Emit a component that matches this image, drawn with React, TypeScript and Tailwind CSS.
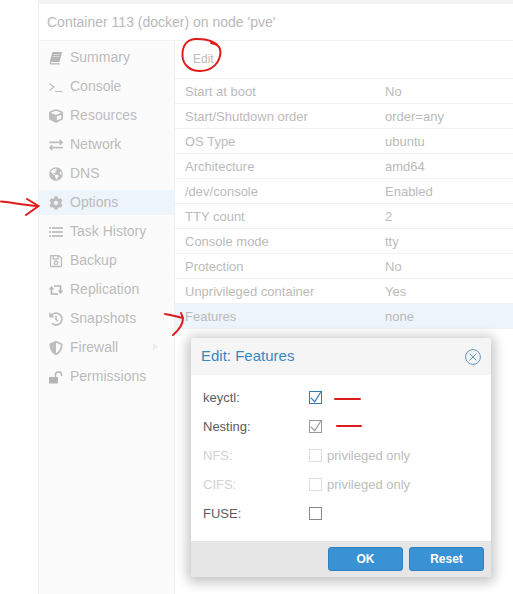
import React from "react";
import {
  FaCube,
  FaExchangeAlt,
  FaGlobeAmericas,
  FaCog,
  FaRegSave,
  FaHistory,
  FaShieldAlt,
} from "react-icons/fa";

function BookIcon() {
  return (
    <svg viewBox="0 0 14 14" className="w-[14px] h-[14px]">
      <path d="M3.5 1 H13 L10.5 11 H2.5 C1.8 11 1.7 12.2 2.5 12.2 H11 L10.6 13.5 H2 C0.8 13.5 0.4 12.4 0.8 11 Z" fill="#b5b5b5" />
      <path d="M4.5 3.5 H10.5 M4 5.5 H10" stroke="#e4e4e4" strokeWidth="0.7" />
    </svg>
  );
}

function ConsoleIcon() {
  return (
    <svg viewBox="0 0 14 14" className="w-[14px] h-[14px]" fill="none" stroke="#bdbdbd" strokeWidth="1.2">
      <path d="M0.5 3.5 L5 7 L0.5 10.5 M6 11.5 H13.5" />
    </svg>
  );
}

function ListIcon() {
  return (
    <svg viewBox="0 0 14 14" className="w-[14px] h-[14px]" fill="#c4c4c4">
      <path d="M0 2 H2 V4 H0 Z M3 2 H14 V4 H3 Z M0 6 H2 V8 H0 Z M3 6 H14 V8 H3 Z M0 10 H2 V12 H0 Z M3 10 H14 V12 H3 Z" />
    </svg>
  );
}

function RetweetIcon() {
  return (
    <svg viewBox="0 0 14 14" className="w-[14px] h-[14px]" fill="none" stroke="#b5b5b5" strokeWidth="1.6">
      <path d="M2.5 6 V11 H9 M11.5 8 V3 H5" />
      <path d="M-0.3 6.5 H5.3 L2.5 3 Z M8.7 7.5 H14.3 L11.5 11 Z" fill="#b5b5b5" stroke="none" />
    </svg>
  );
}

function UnlockIcon() {
  return (
    <svg viewBox="0 0 14 14" className="w-[14px] h-[14px]">
      <rect x="0" y="7" width="9" height="6.5" rx="0.6" fill="#b5b5b5" />
      <path d="M6.5 7 V4.5 C6.5 1 12.5 1 12.5 4.5 V6" fill="none" stroke="#b5b5b5" strokeWidth="1.5" />
    </svg>
  );
}

const navItems = [
  { label: "Summary", icon: BookIcon },
  { label: "Console", icon: ConsoleIcon },
  { label: "Resources", icon: FaCube },
  { label: "Network", icon: FaExchangeAlt },
  { label: "DNS", icon: FaGlobeAmericas },
  { label: "Options", icon: FaCog, active: true },
  { label: "Task History", icon: ListIcon },
  { label: "Backup", icon: FaRegSave },
  { label: "Replication", icon: RetweetIcon },
  { label: "Snapshots", icon: FaHistory },
  { label: "Firewall", icon: FaShieldAlt, arrow: true },
  { label: "Permissions", icon: UnlockIcon },
];

const rows = [
  ["Start at boot", "No"],
  ["Start/Shutdown order", "order=any"],
  ["OS Type", "ubuntu"],
  ["Architecture", "amd64"],
  ["/dev/console", "Enabled"],
  ["TTY count", "2"],
  ["Console mode", "tty"],
  ["Protection", "No"],
  ["Unprivileged container", "Yes"],
  ["Features", "none"],
];

function CheckBox({ color, checked }: { color: string; checked?: boolean }) {
  return (
    <svg viewBox="0 0 13 13" className="w-[13px] h-[13px]" fill="none" stroke={color}>
      <rect x="0.5" y="0.5" width="12" height="12" />
      {checked && <path d="M1.7 6.7 L5.7 10.7 L11.7 1.3" strokeWidth="1.2" />}
    </svg>
  );
}

function FormRow({
  label,
  box,
  text,
  disabled,
}: {
  label: string;
  box: React.ReactNode;
  text?: string;
  disabled?: boolean;
}) {
  return (
    <div className={`flex items-center h-[29px] ${disabled ? "text-[#d2d2d2]" : "text-[#5c5c5c]"}`}>
      <span className="w-[106px]">{label}</span>
      {box}
      {text && <span className="ml-[5px] text-[#bdbdbd]">{text}</span>}
    </div>
  );
}

export default function App() {
  return (
    <div className="relative w-[513px] h-[594px] overflow-hidden bg-white text-[13px] font-['Liberation_Sans',Arial,sans-serif]">
      <div className="ml-[38px] h-full flex flex-col bg-white">
        <div className="h-1 bg-[#f3f3f3]"></div>
        {/* HEADER */}
        <div className="h-[37px] flex items-center pl-[8px] border-l border-b border-[#f0f0f0] text-[14px] text-[#b9b9b9]">
          Container 113 (docker) on node 'pve'
        </div>
        <div className="flex flex-1">
          {/* SIDEBAR */}
          <div className="w-[137px] shrink-0 border-l border-r border-[#f0f0f0] bg-[#fbfbfb] pt-[2px]">
            {navItems.map((item) => {
              const Icon = item.icon;
              return (
                <div
                  key={item.label}
                  className={`relative flex items-center pl-[10px] text-[#bbbbbb] ${
                    item.active ? "h-[25px] my-[2px] bg-[#edf4fa]" : "h-[29px]"
                  }`}
                >
                  <span className="w-[21px] flex text-[#bdbdbd] text-[14px]">
                    <Icon />
                  </span>
                  <span className="text-[14px]">{item.label}</span>
                  {item.arrow && (
                    <span className="absolute left-[114px] top-[10px] w-0 h-0 border-y-[4px] border-y-transparent border-l-[5px] border-l-[#eeeeee]"></span>
                  )}
                </div>
              );
            })}
          </div>
          {/* MAIN */}
          <div className="flex-1">
            <div className="h-[38px] flex items-center pl-[18px] pb-[2px] border-b border-[#eeeeee] text-[12px] text-[#bbbbbb]">
              Edit
            </div>
            {rows.map(([name, value]) => (
              <div
                key={name}
                className={`flex items-center h-[25px] pl-[10px] pt-px border-b border-[#f2f2f2] text-[#bbbbbb] ${
                  name === "Features" ? "bg-[#edf4fa]" : ""
                }`}
              >
                <span className="w-[200px]">{name}</span>
                <span>{value}</span>
              </div>
            ))}
          </div>
        </div>
      </div>

      {/* DIALOG */}
      <div className="absolute left-[191px] top-[338px] w-[300px] h-[239px] flex flex-col rounded-[3px] bg-white shadow-[0_2px_12px_4px_rgba(0,0,0,0.22)]">
        <div className="h-[37px] shrink-0 flex items-center justify-between px-[10px] bg-[#f5f5f5] rounded-t-[3px]">
          <span className="text-[15px] text-[#3b87c0]">Edit: Features</span>
          <svg viewBox="0 0 16 16" className="w-4 h-4" fill="none" stroke="#5f97c4" strokeWidth="1">
            <circle cx="8" cy="8" r="7.4" />
            <path d="M4.6 4.6 L11.4 11.4 M11.4 4.6 L4.6 11.4" />
          </svg>
        </div>
        <div className="flex-1 pl-3 pt-[8px]">
          <FormRow label="keyctl:" box={<CheckBox color="#2f7db5" checked />} />
          <FormRow label="Nesting:" box={<CheckBox color="#999999" checked />} />
          <FormRow label="NFS:" disabled text="privileged only" box={<CheckBox color="#dddddd" />} />
          <FormRow label="CIFS:" disabled text="privileged only" box={<CheckBox color="#dddddd" />} />
          <FormRow label="FUSE:" box={<CheckBox color="#888888" />} />
        </div>
        <div className="h-[36px] shrink-0 flex items-center justify-end gap-[6px] pr-[7px] bg-[#e6e6e6] rounded-b-[3px]">
          <button className="w-[75px] h-6 rounded-[3px] bg-[#3892d4] border border-[#2f80bd] text-white font-bold text-[12px]">
            OK
          </button>
          <button className="w-[75px] h-6 rounded-[3px] bg-[#3892d4] border border-[#2f80bd] text-white font-bold text-[12px]">
            Reset
          </button>
        </div>
      </div>

      {/* RED MARKUP */}
      <svg className="absolute inset-0 pointer-events-none" width="513" height="594" fill="none" stroke="#e01b1b" strokeWidth="2" strokeLinecap="round">
        <path d="M1 201.5 C10 202 22 205 38 206 M27 199 L38.5 206 L26 215" />
        <path d="M219 47 C215 41 206 38.5 195 39 C186 39.5 182 47 182.5 56 C183 65 190 71 200 71 C212 71 220 63 220.5 52 C220.5 47 218 44 211 43" />
        <path d="M165 314 C172 315 178 317 183 318 M181 313 L183 318 C183 325 179 330 173 335" />
        <path d="M335 399 L360 399 M337 426 L361 426" />
      </svg>
    </div>
  );
}
